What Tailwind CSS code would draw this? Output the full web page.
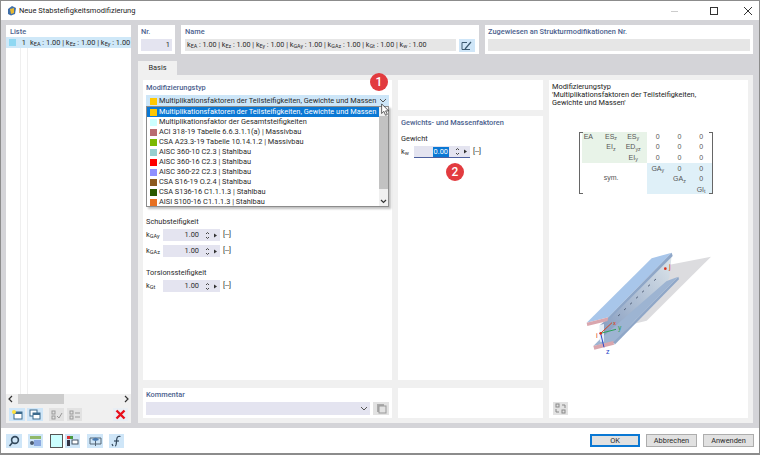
<!doctype html>
<html lang="de">
<head>
<meta charset="UTF-8" />
<title>Neue Stabsteifigkeitsmodifizierung</title>
<script src="https://cdn.jsdelivr.net/npm/@tailwindcss/browser@4"></script>
</head>
<body class="w-[760px] h-[455px] overflow-hidden bg-white font-['Roboto',sans-serif] text-[7.4px] leading-[10px] text-[#2a2a2a]">
<div class="w-[760px] h-[455px] flex flex-col border border-[#8c8c8c] border-b-2">
  <!-- title bar -->
  <div class="h-[19px] shrink-0 flex items-center bg-white pl-[6px]">
    <svg width="10" height="11" viewBox="0 0 10 11"><path d="M1 4 L5 1 L9 3 L8 9 L4 10.500 L1 9 Z" fill="#3f6ea8"/><path d="M3 4 L7 3 L7 8 L4 9 Z" fill="#e8b830"/></svg>
    <span class="ml-[2px] text-[7.5px] text-[#222]">Neue Stabsteifigkeitsmodifizierung</span>
    <div class="ml-auto flex items-center">
      <svg width="10" height="10" class="mr-[30px]"><path d="M2 5.500H9" stroke="#ccc"/></svg>
      <svg width="10" height="10" class="mr-[24px]"><rect x="1.500" y="1.500" width="7" height="7" fill="none" stroke="#333"/></svg>
      <svg width="10" height="10" class="mr-[6px]"><path d="M1 1L9 9M9 1L1 9" stroke="#333"/></svg>
    </div>
  </div>

  <!-- main area -->
  <div class="h-[408px] shrink-0 flex bg-[#d4d4d8] pt-[5px] pl-[5px]">
    <!-- Liste -->
    <div class="w-[125px] h-[398px] flex flex-col">
      <div class="h-[12px] pl-[4px] pt-[2px] bg-white font-medium text-[#4c5f8e]">Liste</div>
      <div class="flex-1 bg-white relative">
        <div class="absolute left-[14px] top-0 bottom-0 w-px bg-[#efefef]"></div>
        <div class="absolute left-[21px] top-0 bottom-0 w-px bg-[#efefef]"></div>
        <div class="relative h-[11px] bg-[#cfe8f8] flex items-center pl-[3px]">
          <span class="w-[7px] h-[7px] shrink-0 bg-[#8fd8f2]"></span>
          <span class="w-[10px] shrink-0 text-right">1</span>
          <span class="ml-[4px] whitespace-nowrap">k<sub>EA</sub> : 1.00 | k<sub>Ez</sub> : 1.00 | k<sub>Ey</sub> : 1.00</span>
        </div>
      </div>
      <div class="h-[10px] bg-[#f0f0f0] flex items-center justify-between px-[1px] text-[#333]">
        <svg width="8" height="8"><path d="M5 1L2 4L5 7" fill="none" stroke="#333" stroke-width="1.2"/></svg>
        <div class="w-[46px] h-[10px] bg-[#cdcdcd] mr-auto ml-[3px]"></div>
        <svg width="8" height="8"><path d="M3 1L6 4L3 7" fill="none" stroke="#333" stroke-width="1.2"/></svg>
      </div>
      <div class="h-[19px] bg-[#f0f0f0] pt-[4px] pl-[3px] flex gap-[2px] items-start">
        <div class="w-[16px] h-[13px] bg-[#cfe6f8] flex items-center justify-center">
          <svg width="12" height="11" viewBox="0 0 12 11"><rect x="3" y="3" width="8" height="7" fill="#fff" stroke="#3c6a8c"/><rect x="3" y="3" width="8" height="2" fill="#3c6a8c"/><circle cx="3" cy="3" r="2" fill="#ffe23c"/></svg>
        </div>
        <div class="w-[16px] h-[13px] bg-[#cfe6f8] flex items-center justify-center">
          <svg width="12" height="11" viewBox="0 0 12 11"><rect x="1" y="1" width="7" height="6" fill="#fff" stroke="#3c6a8c"/><rect x="4" y="4" width="7" height="6" fill="#fff" stroke="#3c6a8c"/><rect x="4" y="4" width="7" height="2" fill="#3c6a8c"/></svg>
        </div>
        <div class="ml-[4px] w-[15px] h-[13px] bg-[#e2e2e2] flex items-center justify-center">
          <svg width="12" height="10" viewBox="0 0 12 10" fill="none" stroke="#9a9a9a"><rect x="1" y="1" width="3" height="3"/><rect x="1" y="6" width="3" height="3"/><path d="M6 6L8 8L11 3"/></svg>
        </div>
        <div class="ml-[1px] w-[15px] h-[13px] bg-[#e2e2e2] flex items-center justify-center">
          <svg width="12" height="10" viewBox="0 0 12 10" fill="none" stroke="#9a9a9a"><rect x="1" y="1" width="3" height="3"/><rect x="1" y="6" width="3" height="3"/><path d="M6 3H11M6 7H11"/></svg>
        </div>
        <div class="ml-[29px] w-[15px] h-[13px] bg-[#e8eef4] flex items-center justify-center">
          <svg width="11" height="11" viewBox="0 0 11 11"><path d="M1.500 1.500L9.500 9.500M9.500 1.500L1.500 9.500" stroke="#e8101c" stroke-width="2.4"/></svg>
        </div>
      </div>
    </div>

    <!-- right column -->
    <div class="w-[626px] ml-[1px] flex flex-col">
      <!-- header panels -->
      <div class="h-[29px] shrink-0 flex gap-[6px] pl-[6px] pr-[5px]">
        <div class="w-[37px] bg-white px-[3px] pt-[2px]">
          <div class="font-medium text-[#4c5f8e]">Nr.</div>
          <div class="mt-[2px] h-[12px] bg-[#e4e4f0] text-right pr-[2px] leading-[12px]">1</div>
        </div>
        <div class="w-[298px] bg-white px-[4px] pt-[2px]">
          <div class="font-medium text-[#4c5f8e]">Name</div>
          <div class="mt-[2px] flex gap-[3px]">
            <div class="w-[272px] h-[12px] bg-[#e6e6e6] pl-[2px] text-[7.2px] leading-[12px] whitespace-nowrap">k<sub>EA</sub> : 1.00 | k<sub>Ez</sub> : 1.00 | k<sub>Ey</sub> : 1.00 | k<sub>GAy</sub> : 1.00 | k<sub>GAz</sub> : 1.00 | k<sub>Gt</sub> : 1.00 | k<sub>w</sub> : 1.00</div>
            <div class="w-[16px] h-[13px] bg-[#cfe6f8] flex items-center justify-center">
              <svg width="12" height="10" viewBox="0 0 12 10" fill="none" stroke="#3c5a70"><path d="M1 1.500H6M1 1.500V8.500H9"/><path d="M4 8L10 1" stroke-width="1.2"/></svg>
            </div>
          </div>
        </div>
        <div class="flex-1 bg-white px-[3px] pt-[2px]">
          <div class="font-medium text-[#4c5f8e]">Zugewiesen an Strukturmodifikationen Nr.</div>
          <div class="mt-[2px] h-[12px] bg-[#e6e6e6]"></div>
        </div>
      </div>

      <!-- tab strip + page -->
      <div class="flex-1 mt-[1px] pl-[1px] pr-[5px] pb-[5px] flex flex-col">
        <div class="h-[20px] shrink-0 flex items-end ml-[5px]">
          <div class="w-[39px] h-[14px] bg-[#f0f0f0] text-center leading-[14px]">Basis</div>
        </div>
        <div class="flex-1 ml-[5px] bg-[#f0f0f0] p-[5px] flex gap-[6px]">
          <!-- col 1 -->
          <div class="w-[249px] flex flex-col gap-[8px]">
            <div class="h-[300px] bg-white relative px-[3px] pt-[3px]">
              <div class="font-medium text-[#4c5f8e]">Modifizierungstyp</div>
              <div class="relative mt-[2px] h-[12px] bg-[#cde6f8] flex items-center pl-[4px]">
                <span class="w-[7px] h-[7px] shrink-0 bg-[#ffc800]"></span>
                <span class="ml-[2px] whitespace-nowrap">Multiplikationsfaktoren der Teilsteifigkeiten, Gewichte und Massen</span>
                <!-- open dropdown -->
                <div class="absolute left-0 top-[11px] w-[243px] h-[101px] bg-white border border-[#8c8c8c] shadow-[2px_2px_2px_rgba(0,0,0,0.25)] flex z-10">
                  <div class="w-[232px] flex flex-col">
                    <div class="h-[10px] bg-[#0a78d4] text-white flex items-center pl-[3px]"><span class="w-[7px] h-[7px] shrink-0 bg-[#ffc800]"></span><span class="ml-[2px] whitespace-nowrap">Multiplikationsfaktoren der Teilsteifigkeiten, Gewichte und Massen</span></div>
                    <div class="h-[10px] flex items-center pl-[3px]"><span class="w-[7px] h-[7px] shrink-0 bg-[#ccffff]"></span><span class="ml-[2px] whitespace-nowrap">Multiplikationsfaktor der Gesamtsteifigkeiten</span></div>
                    <div class="h-[10px] flex items-center pl-[3px]"><span class="w-[7px] h-[7px] shrink-0 bg-[#b96c70]"></span><span class="ml-[2px] whitespace-nowrap">ACI 318-19 Tabelle 6.6.3.1.1(a) | Massivbau</span></div>
                    <div class="h-[10px] flex items-center pl-[3px]"><span class="w-[7px] h-[7px] shrink-0 bg-[#7ab800]"></span><span class="ml-[2px] whitespace-nowrap">CSA A23.3-19 Tabelle 10.14.1.2 | Massivbau</span></div>
                    <div class="h-[10px] flex items-center pl-[3px]"><span class="w-[7px] h-[7px] shrink-0 bg-[#96cfcf]"></span><span class="ml-[2px] whitespace-nowrap">AISC 360-10 C2.3 | Stahlbau</span></div>
                    <div class="h-[10px] flex items-center pl-[3px]"><span class="w-[7px] h-[7px] shrink-0 bg-[#ff0000]"></span><span class="ml-[2px] whitespace-nowrap">AISC 360-16 C2.3 | Stahlbau</span></div>
                    <div class="h-[10px] flex items-center pl-[3px]"><span class="w-[7px] h-[7px] shrink-0 bg-[#9090ff]"></span><span class="ml-[2px] whitespace-nowrap">AISC 360-22 C2.3 | Stahlbau</span></div>
                    <div class="h-[10px] flex items-center pl-[3px]"><span class="w-[7px] h-[7px] shrink-0 bg-[#8c5a1e]"></span><span class="ml-[2px] whitespace-nowrap">CSA S16-19 O.2.4 | Stahlbau</span></div>
                    <div class="h-[10px] flex items-center pl-[3px]"><span class="w-[7px] h-[7px] shrink-0 bg-[#2a5a00]"></span><span class="ml-[2px] whitespace-nowrap">CSA S136-16 C1.1.1.3 | Stahlbau</span></div>
                    <div class="h-[10px] flex items-center pl-[3px]"><span class="w-[7px] h-[7px] shrink-0 bg-[#e87020]"></span><span class="ml-[2px] whitespace-nowrap">AISI S100-16 C1.1.1.3 | Stahlbau</span></div>
                  </div>
                  <div class="flex-1 bg-[#f0f0f0] flex flex-col">
                    <div class="h-[9px]"></div>
                    <div class="h-[73px] bg-[#c2c2c2]"></div>
                    <div class="flex-1 flex items-end justify-center pb-[2px]"><svg width="7" height="5"><path d="M1 1L3.500 3.500L6 1" fill="none" stroke="#333" stroke-width="1.2"/></svg></div>
                  </div>
                </div>
                <svg class="absolute right-[2px] top-[3px]" width="8" height="6"><path d="M1 1L4 4L7 1" fill="none" stroke="#555"/></svg>
              </div>

              <!-- rows under the dropdown -->
              <div class="mt-[110px]">Schubsteifigkeit</div>
              <div class="mt-[2px] flex items-center h-[12px]">
                <span class="w-[17px]">k<sub>GAy</sub></span>
                <div class="w-[57px] h-[12px] bg-[#e4e4f0] flex items-center justify-end pr-[2px]">
                  <span class="mr-[6px]">1.00</span>
                  <svg width="13" height="9"><path d="M1 3L2.500 1.500L4 3M1 6L2.500 7.500L4 6" fill="none" stroke="#444"/><path d="M9 2.500L12 4.500L9 6.500Z" fill="#333"/></svg>
                </div>
                <span class="ml-[3px]">[--]</span>
              </div>
              <div class="mt-[4px] flex items-center h-[12px]">
                <span class="w-[17px]">k<sub>GAz</sub></span>
                <div class="w-[57px] h-[12px] bg-[#e4e4f0] flex items-center justify-end pr-[2px]">
                  <span class="mr-[6px]">1.00</span>
                  <svg width="13" height="9"><path d="M1 3L2.500 1.500L4 3M1 6L2.500 7.500L4 6" fill="none" stroke="#444"/><path d="M9 2.500L12 4.500L9 6.500Z" fill="#333"/></svg>
                </div>
                <span class="ml-[3px]">[--]</span>
              </div>
              <div class="mt-[11px]">Torsionssteifigkeit</div>
              <div class="mt-[2px] flex items-center h-[12px]">
                <span class="w-[17px]">k<sub>Gt</sub></span>
                <div class="w-[57px] h-[12px] bg-[#e4e4f0] flex items-center justify-end pr-[2px]">
                  <span class="mr-[6px]">1.00</span>
                  <svg width="13" height="9"><path d="M1 3L2.500 1.500L4 3M1 6L2.500 7.500L4 6" fill="none" stroke="#444"/><path d="M9 2.500L12 4.500L9 6.500Z" fill="#333"/></svg>
                </div>
                <span class="ml-[3px]">[--]</span>
              </div>

              <div class="absolute left-[227px] top-[-7px] w-[18px] h-[18px] rounded-full bg-[#e23b3f] text-white text-[12px] leading-[18px] text-center font-medium z-20">1</div>
              <svg class="absolute left-[237px] top-[23px] z-30" width="12" height="14" viewBox="0 0 12 16"><path d="M1 1V12L3.500 9.500L5.500 14L7.500 13L5.500 9H9Z" fill="#fff" stroke="#222" stroke-width="0.8"/></svg>
            </div>
            <div class="flex-1 bg-white px-[3px] pt-[2px]">
              <div class="font-medium text-[#4c5f8e]">Kommentar</div>
              <div class="mt-[2px] flex gap-[3px]">
                <div class="w-[224px] h-[13px] bg-[#e4e4f0] flex items-center justify-end pr-[2px]"><svg width="8" height="6"><path d="M1 1L4 4L7 1" fill="none" stroke="#555"/></svg></div>
                <div class="w-[16px] h-[13px] bg-[#e2e2e2] flex items-center justify-center"><svg width="11" height="11"><rect x="1" y="1" width="7" height="8" fill="#aaa"/><rect x="3" y="3" width="7" height="7" fill="#e2e2e2" stroke="#999"/></svg></div>
              </div>
            </div>
          </div>

          <!-- col 2 -->
          <div class="w-[145px] flex flex-col">
            <div class="h-[30px] bg-white"></div>
            <div class="mt-[6px] h-[264px] bg-white relative px-[3px] pt-[2px]">
              <div class="font-medium text-[#4c5f8e] whitespace-nowrap">Gewichts- und Massenfaktoren</div>
              <div class="mt-[6px]">Gewicht</div>
              <div class="mt-[2px] flex items-center h-[12px]">
                <span class="w-[13px]">k<sub>w</sub></span>
                <div class="w-[56px] h-[12px] bg-[#e4e4f0] border-b border-[#4c5f9e] flex items-center justify-end pr-[2px]">
                  <span class="mr-[6px] bg-[#0a78d4] text-white px-px">0.00</span>
                  <svg width="13" height="9"><path d="M1 3L2.500 1.500L4 3M1 6L2.500 7.500L4 6" fill="none" stroke="#444"/><path d="M9 2.500L12 4.500L9 6.500Z" fill="#333"/></svg>
                </div>
                <span class="ml-[3px]">[--]</span>
              </div>
              <div class="absolute left-[48px] top-[47px] w-[18px] h-[18px] rounded-full bg-[#e23b3f] text-white text-[12px] leading-[18px] text-center font-medium">2</div>
            </div>
            <div class="mt-[8px] flex-1 bg-white"></div>
          </div>

          <!-- col 3 -->
          <div class="w-[199px] bg-white relative pl-[3px] pt-[3px] leading-[8px] text-[#222]">
            <div>Modifizierungstyp</div>
            <div>'Multiplikationsfaktoren der Teilsteifigkeiten,</div>
            <div>Gewichte und Massen'</div>

            <!-- stiffness matrix -->
            <div class="absolute left-[30px] top-[52px] w-[134px] h-[62px] border-x border-[#666] font-['Liberation_Sans',sans-serif] text-[7px] leading-[10px] text-[#555]">
              <div class="absolute left-0 top-0 w-[3px] h-full border-y border-[#666]"></div>
              <div class="absolute right-0 top-0 w-[3px] h-full border-y border-[#666]"></div>
              <div class="ml-[2px] grid grid-cols-[repeat(6,21.67px)] grid-rows-[repeat(6,10.33px)] text-center">
                <div class="bg-[#e8f3e8] pr-[9px]">EA</div><div class="bg-[#e8f3e8] pr-[7px]">ES<sub>z</sub></div><div class="bg-[#e8f3e8] pr-[6px]">ES<sub>y</sub></div><div>0</div><div>0</div><div>0</div>
                <div class="bg-[#e8f3e8]"></div><div class="bg-[#e8f3e8] pr-[7px]">EI<sub>z</sub></div><div class="bg-[#e8f3e8] pr-[6px]">ED<sub>yz</sub></div><div>0</div><div>0</div><div>0</div>
                <div class="bg-[#e8f3e8]"></div><div class="bg-[#e8f3e8]"></div><div class="bg-[#e8f3e8] pr-[6px]">EI<sub>y</sub></div><div>0</div><div>0</div><div>0</div>
                <div></div><div></div><div></div><div class="bg-[#dff0f8] pt-px">GA<sub>y</sub></div><div class="bg-[#dff0f8] pt-px">0</div><div class="bg-[#dff0f8] pt-px">0</div>
                <div></div><div class="pr-[7px]">sym.</div><div></div><div class="bg-[#dff0f8]"></div><div class="bg-[#dff0f8] pt-px">GA<sub>z</sub></div><div class="bg-[#dff0f8] pt-px">0</div>
                <div></div><div></div><div></div><div class="bg-[#dff0f8]"></div><div class="bg-[#dff0f8]"></div><div class="bg-[#dff0f8] pt-px">GI<sub>t</sub></div>
              </div>
            </div>

            <!-- member picture -->
            <svg class="absolute left-[1px] top-[130px]" width="198" height="210" viewBox="0 0 594 630">
              <defs>
                <linearGradient id="web" x1="0" y1="1" x2="1" y2="0"><stop offset="0" stop-color="#7f97bd"/><stop offset="1" stop-color="#dde5ea"/></linearGradient>
              </defs>
              <polygon points="355,165 483,140 290,332 250,342" fill="#dcdcdf"/>
              <polygon points="150,345 175,325 365,135 358,205 195,400 160,395" fill="url(#web)"/>
              <polygon points="192,395 385,200 387,208 194,404" fill="#8fa7c8"/>
              <polygon points="150,388 350,213 385,200 192,395 130,408" fill="#9db4d2"/>
              <polygon points="130,408 190,393 192,404 133,419" fill="#d9a6ae"/>
              <polygon points="148,345 162,342 162,395 150,395" fill="#e4ecf4"/>
              <polygon points="110,338 305,145 365,128 175,322" fill="#a8c6ea"/>
              <polygon points="110,338 175,322 173,333 112,348" fill="#d9a6ae"/>
              <polygon points="365,128 368,138 173,333 175,322" fill="#8fa7c8"/>
              <path d="M204 318L210 313M222 300L228 295M240 283L246 278M258 265L264 260M276 247L282 242M294 229L300 224M312 212L318 207" stroke="#55647c" stroke-width="3"/>
              <path d="M152 370L186 338" stroke="#d8431c" stroke-width="3"/>
              <path d="M152 370L198 358" stroke="#2ca05a" stroke-width="3"/>
              <path d="M152 370L162 412" stroke="#2a46c8" stroke-width="3"/>
              <circle cx="152" cy="370" r="4" fill="#d8301c"/>
              <circle cx="346" cy="176" r="4" fill="#d8301c"/>
            </svg>
            <span class="absolute left-[47px] top-[251px] text-[7px] leading-[10px] text-[#d8431c]">i</span>
            <span class="absolute left-[120px] top-[182px] text-[7px] leading-[10px] text-[#d8431c]">j</span>
            <span class="absolute left-[64px] top-[238px] text-[6px] leading-[10px] text-[#d8431c]">x</span>
            <span class="absolute left-[69px] top-[243px] text-[7px] leading-[10px] text-[#2ca05a]">y</span>
            <span class="absolute left-[57px] top-[267px] text-[7px] leading-[10px] text-[#2a46c8]">z</span>

            <div class="absolute left-[4px] bottom-[3px] w-[15px] h-[13px] bg-[#e2e2e2] flex items-center justify-center">
              <svg width="11" height="11" fill="none" stroke="#888"><rect x="1" y="1" width="3" height="3"/><rect x="7" y="7" width="3" height="3"/><path d="M7 2H10V5M4 9H1V6"/></svg>
            </div>
          </div>
        </div>
      </div>
    </div>
  </div>

  <!-- footer -->
  <div class="flex-1 bg-white flex items-center pl-[5px] pr-[5px]">
    <div class="w-[16px] h-[14px] bg-[#cfe6f8] flex items-center justify-center"><svg width="12" height="12" fill="none" stroke="#33495c" stroke-width="1.6"><circle cx="7" cy="5" r="3.400"/><path d="M4.500 7.500L1.500 11"/></svg></div>
    <div class="ml-[6px] w-[15px] h-[14px] bg-[#cfe6f8] flex items-center justify-center"><svg width="13" height="12"><rect x="1" y="1" width="11" height="3" fill="#8fb86a"/><rect x="5" y="5" width="7" height="6" fill="#8aa8e0"/><circle cx="3" cy="8" r="2" fill="#4a5a70"/></svg></div>
    <div class="ml-[7px] w-[13px] h-[14px] bg-[#ccffff] border border-[#555]"></div>
    <div class="ml-[2px] w-[15px] h-[14px] bg-[#cfe6f8] flex items-center justify-center"><svg width="13" height="12"><rect x="1" y="1" width="3" height="3" fill="#d83030"/><rect x="4" y="1" width="3" height="3" fill="#4a9a40"/><rect x="1" y="5" width="3" height="6" fill="#334"/><rect x="6" y="5" width="6" height="4" fill="#fff" stroke="#456"/></svg></div>
    <div class="ml-[7px] w-[16px] h-[14px] bg-[#cfe6f8] flex items-center justify-center"><svg width="13" height="12" fill="none"><path d="M1 3H12V9H1Z" stroke="#567"/><path d="M3 5C5 2 8 2 10 5L6.500 6Z" fill="#4a7ab0"/><path d="M6.500 6V11" stroke="#567"/></svg></div>
    <div class="ml-[6px] w-[15px] h-[14px] bg-[#cfe6f8] flex items-center justify-center"><svg width="13" height="12" fill="none" stroke="#33495c" stroke-width="1.2"><path d="M5 11C7 11 6 6 7 3C7.500 1.500 9 1 10.500 1.500"/><path d="M4 6H9"/><path d="M2 9L3 11"/></svg></div>
    <div class="ml-auto flex gap-[6px]">
      <div class="w-[50px] h-[13px] bg-[#e1e1e1] border-2 border-[#0a78d4] text-center leading-[9px]">OK</div>
      <div class="w-[51px] h-[13px] bg-[#e1e1e1] border border-[#adadad] text-center leading-[11px]">Abbrechen</div>
      <div class="w-[51px] h-[13px] bg-[#e1e1e1] border border-[#adadad] text-center leading-[11px]">Anwenden</div>
    </div>
  </div>
</div>
</body>
</html>
